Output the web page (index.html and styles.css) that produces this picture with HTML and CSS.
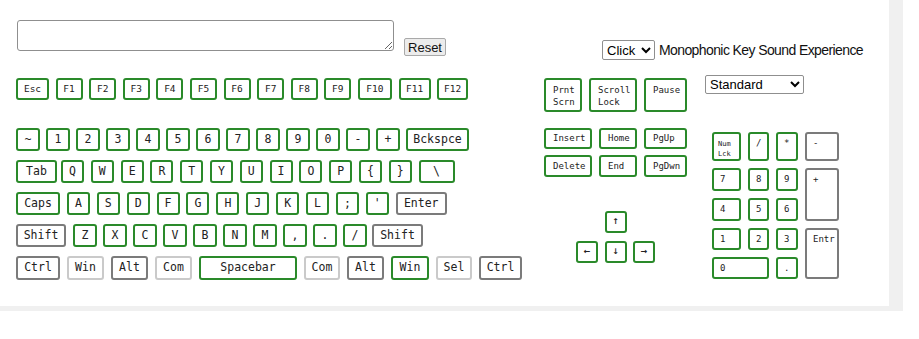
FILE: index.html
```html
<!DOCTYPE html>
<html lang="en">

<head>
    <meta charset="UTF-8">
    <meta name="viewport" content="width=device-width, initial-scale=1.0">
    <title>Virtual Keyboard</title>

    <link rel="stylesheet" href="styles.css">
</head>

<body>
    <div class="page">
        <!-- output + controls -->
        <div class="top">
            <textarea class="output"></textarea>
            <button type="button" class="reset">Reset</button>
            <div class="sound">
                <select class="sound-select">
                    <option>Click</option>
                    <option>Beep</option>
                    <option>None</option>
                </select>
                <span class="sound-label">Monophonic Key Sound Experience</span>
            </div>
        </div>

        <div class="board">
            <!-- main block -->
            <div class="main">
                <div class="frow">
                    <button class="key k-esc">Esc</button>
                    <button class="key">F1</button>
                    <button class="key">F2</button>
                    <button class="key">F3</button>
                    <button class="key">F4</button>
                    <button class="key">F5</button>
                    <button class="key">F6</button>
                    <button class="key">F7</button>
                    <button class="key">F8</button>
                    <button class="key">F9</button>
                    <button class="key k-f10">F10</button>
                    <button class="key k-f11">F11</button>
                    <button class="key k-f12">F12</button>
                </div>

                <div class="rows">
                    <div class="row r1">
                        <button class="key">~</button>
                        <button class="key">1</button>
                        <button class="key">2</button>
                        <button class="key">3</button>
                        <button class="key">4</button>
                        <button class="key">5</button>
                        <button class="key">6</button>
                        <button class="key">7</button>
                        <button class="key">8</button>
                        <button class="key">9</button>
                        <button class="key">0</button>
                        <button class="key">-</button>
                        <button class="key">+</button>
                        <button class="key k-back">Bckspce</button>
                    </div>
                    <div class="row r2">
                        <button class="key k-tab">Tab</button>
                        <button class="key">Q</button>
                        <button class="key">W</button>
                        <button class="key">E</button>
                        <button class="key">R</button>
                        <button class="key">T</button>
                        <button class="key">Y</button>
                        <button class="key">U</button>
                        <button class="key">I</button>
                        <button class="key">O</button>
                        <button class="key">P</button>
                        <button class="key">{</button>
                        <button class="key">}</button>
                        <button class="key k-bslash">\</button>
                    </div>
                    <div class="row r3">
                        <button class="key k-caps">Caps</button>
                        <button class="key">A</button>
                        <button class="key">S</button>
                        <button class="key">D</button>
                        <button class="key">F</button>
                        <button class="key">G</button>
                        <button class="key">H</button>
                        <button class="key">J</button>
                        <button class="key">K</button>
                        <button class="key">L</button>
                        <button class="key">;</button>
                        <button class="key">'</button>
                        <button class="key k-enter grey">Enter</button>
                    </div>
                    <div class="row r4">
                        <button class="key k-shift grey">Shift</button>
                        <button class="key">Z</button>
                        <button class="key">X</button>
                        <button class="key">C</button>
                        <button class="key">V</button>
                        <button class="key">B</button>
                        <button class="key">N</button>
                        <button class="key">M</button>
                        <button class="key">,</button>
                        <button class="key">.</button>
                        <button class="key">/</button>
                        <button class="key k-rshift grey">Shift</button>
                    </div>
                    <div class="row r5">
                        <button class="key k-ctrl grey">Ctrl</button>
                        <button class="key k-win light">Win</button>
                        <button class="key k-alt grey">Alt</button>
                        <button class="key k-com light">Com</button>
                        <button class="key k-space">Spacebar</button>
                        <button class="key k-rcom light">Com</button>
                        <button class="key k-alt grey">Alt</button>
                        <button class="key k-rwin">Win</button>
                        <button class="key k-sel light">Sel</button>
                        <button class="key k-rctrl grey">Ctrl</button>
                    </div>
                </div>
            </div>

            <!-- navigation block -->
            <div class="nav">
                <div class="nav-top">
                    <button class="key w38">Prnt<br>Scrn</button>
                    <button class="key w48">Scroll<br>Lock</button>
                    <button class="key w43">Pause</button>
                </div>
                <div class="nav-row first">
                    <button class="key w48">Insert</button>
                    <button class="key w38">Home</button>
                    <button class="key w43">PgUp</button>
                </div>
                <div class="nav-row">
                    <button class="key w48">Delete</button>
                    <button class="key w38">End</button>
                    <button class="key w43">PgDwn</button>
                </div>
                <div class="arrows">
                    <div class="arrow-row">
                        <button class="key">&#8593;</button>
                    </div>
                    <div class="arrow-row">
                        <button class="key">&#8592;</button>
                        <button class="key">&#8595;</button>
                        <button class="key">&#8594;</button>
                    </div>
                </div>
            </div>

            <!-- layout select + numpad -->
            <div class="side">
                <select class="mode">
                    <option>Standard</option>
                    <option>Dvorak</option>
                </select>
                <div class="numpad">
                    <button class="key numlock">Num<br>Lck</button>
                    <button class="key">/</button>
                    <button class="key">*</button>
                    <button class="key grey">-</button>
                    <button class="key">7</button>
                    <button class="key">8</button>
                    <button class="key">9</button>
                    <button class="key grey tall">+</button>
                    <button class="key">4</button>
                    <button class="key">5</button>
                    <button class="key">6</button>
                    <button class="key">1</button>
                    <button class="key">2</button>
                    <button class="key">3</button>
                    <button class="key grey tall">Entr</button>
                    <button class="key zero">0</button>
                    <button class="key">.</button>
                </div>
            </div>
        </div>
    </div>
</body>

</html>
```

FILE: styles.css
```css
body {
    margin: 0;
    font-family: "Liberation Sans", Arial, sans-serif;
    background-color: #fff;
}

/* white panel with grey edge */
.page {
    box-sizing: border-box;
    width: 903px;
    height: 311px;
    padding: 20px 0 0 16px;
    border-right: 14px solid #f0f0f0;
    border-bottom: 5px solid #f0f0f0;
}

/* top controls */
.top {
    display: flex;
    align-items: flex-start;
}

.output {
    box-sizing: border-box;
    width: 377px;
    height: 31px;
    margin: 0 0 0 1px;
    padding: 2px;
    border: 1px solid #8f8f8f;
    border-radius: 3px;
}

.reset {
    box-sizing: border-box;
    width: 42px;
    height: 18px;
    margin: 18px 0 0 10px;
    padding: 0;
    font-family: "Liberation Sans", Arial, sans-serif;
    font-size: 13px;
    color: #111;
    background-color: #ececec;
    border: 1px solid #a9a9a9;
    border-radius: 2px;
}

.sound {
    display: flex;
    align-items: center;
    margin: 20px 0 0 156px;
}

.sound-select {
    box-sizing: border-box;
    width: 53px;
    height: 20px;
    font-family: "Liberation Sans", Arial, sans-serif;
    font-size: 13px;
    border: 1px solid #8f8f8f;
    border-radius: 2px;
    background-color: #fff;
}

.sound-label {
    margin-left: 4px;
    font-size: 14px;
    letter-spacing: -0.6px;
    color: #111;
}

/* keyboard */
.board {
    display: flex;
    align-items: flex-start;
    margin-top: 15px;
}

.key {
    box-sizing: border-box;
    display: flex;
    align-items: center;
    justify-content: center;
    height: 100%;
    padding: 0;
    border: 2px solid #2a8a2a;
    border-radius: 3px;
    background-color: #fff;
    color: #222;
    font-family: "DejaVu Sans Mono", monospace;
    font-size: 11.5px;
    line-height: 1;
    cursor: pointer;
}

.key.grey {
    border-color: #7b7b7b;
}

.key.light {
    border-color: #cacaca;
}

.main {
    width: 506px;
    margin-top: 3px;
}

.frow {
    display: flex;
    gap: 6.6px;
    height: 22px;
}

.frow .key {
    width: 27px;
    font-size: 9.5px;
}

.frow .k-esc {
    width: 33px;
}

.frow .k-f10 {
    width: 34px;
}

.frow .k-f11 {
    width: 32px;
}

.frow .k-f12 {
    width: 31px;
}

.rows {
    display: flex;
    flex-direction: column;
    gap: 9px;
    margin-top: 28px;
}

.row {
    display: flex;
    height: 23px;
}

.r1 {
    gap: 6px;
}

.r1 .key {
    width: 24px;
}

.r1 .k-back {
    width: 63px;
}

.r2 {
    gap: 6.8px;
}

.r2 .key {
    width: 23px;
}

.r2 .k-tab {
    width: 41px;
    margin-right: -2.8px;
}

.r2 .k-bslash {
    width: 36px;
}

.r3 {
    gap: 6.9px;
}

.r3 .key {
    width: 23px;
}

.r3 .k-caps {
    width: 44px;
}

.r3 .k-enter {
    width: 51px;
}

.r4 {
    gap: 6px;
}

.r4 .key {
    width: 24px;
}

.r4 .k-shift {
    width: 50px;
    margin-right: 1px;
}

.r4 .k-rshift {
    width: 51px;
    margin-left: -1px;
}

.r5 {
    gap: 7px;
    height: 24px;
}

.r5 .k-ctrl { width: 44px; }
.r5 .k-win { width: 37px; }
.r5 .k-alt { width: 37px; }
.r5 .k-com { width: 37px; }
.r5 .k-space { width: 98px; }
.r5 .k-rcom { width: 36px; }
.r5 .k-rwin { width: 38px; }
.r5 .k-sel { width: 36px; }
.r5 .k-rctrl { width: 43px; }

/* navigation cluster */
.nav {
    width: 143px;
    margin: 3px 0 0 22px;
}

.nav .key {
    justify-content: flex-start;
    padding-left: 7px;
    font-size: 9px;
}

.w38 { width: 38px; }
.w43 { width: 43px; }
.w48 { width: 48px; }

.nav-top {
    display: flex;
    gap: 7px;
    height: 34px;
}

.nav-top .key {
    align-items: flex-start;
    padding-top: 4px;
    text-align: left;
    line-height: 12px;
}

.nav-row {
    display: flex;
    gap: 7px;
    height: 22px;
    margin-top: 6px;
}

.nav-row.first {
    height: 21px;
    margin-top: 16px;
}

.arrows {
    display: flex;
    flex-direction: column;
    align-items: center;
    gap: 8px;
    margin-top: 34px;
}

.arrow-row {
    display: flex;
    gap: 6.5px;
    height: 22px;
}

.nav .arrow-row .key {
    width: 22px;
    padding: 0;
    justify-content: center;
    font-family: "DejaVu Sans", sans-serif;
    font-size: 8px;
    font-weight: bold;
}

/* layout select + numpad */
.side {
    width: 134px;
    margin-left: 18px;
}

.mode {
    box-sizing: border-box;
    display: block;
    width: 99px;
    height: 19px;
    font-family: "Liberation Sans", Arial, sans-serif;
    font-size: 13px;
    border: 1px solid #8f8f8f;
    border-radius: 2px;
    background-color: #fff;
}

.numpad {
    display: grid;
    grid-template-columns: 29px 21px 22px 34px;
    grid-template-rows: 29px 23px 23px 22px 22px;
    gap: 7px;
    margin: 38px 0 0 7px;
}

.numpad .key {
    align-items: flex-start;
    justify-content: flex-start;
    padding: 4px 0 0 6px;
    font-size: 9px;
    line-height: 11px;
}

.numpad .numlock {
    padding: 5px 0 0 4px;
    font-size: 7px;
    line-height: 10px;
    text-align: left;
}

.numpad .tall {
    grid-row: span 2;
}

.numpad .zero {
    grid-column: span 2;
}
```
